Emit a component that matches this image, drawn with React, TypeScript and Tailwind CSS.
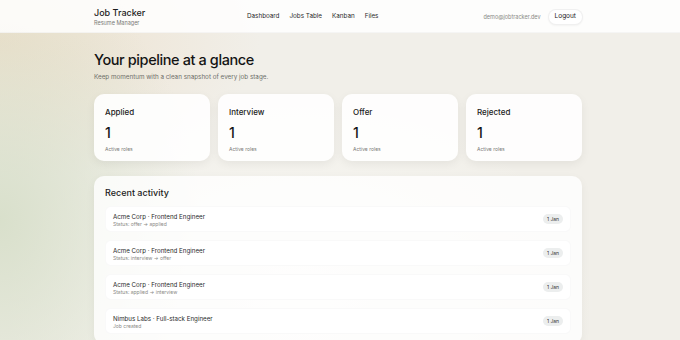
import React from 'react';

const stages = ['Applied', 'Interview', 'Offer', 'Rejected'];

const activity = [
  { title: 'Acme Corp · Frontend Engineer', detail: 'Status: offer → applied' },
  { title: 'Acme Corp · Frontend Engineer', detail: 'Status: interview → offer' },
  { title: 'Acme Corp · Frontend Engineer', detail: 'Status: applied → interview' },
  { title: 'Nimbus Labs · Full-stack Engineer', detail: 'Job created' },
];

function Header() {
  return (
    <header className="h-[33px] bg-white/85 border-b border-black/[0.03]">
      <div className="ml-[94px] flex h-full w-[489px] items-center pt-[2px]">
        <div className="flex w-[153px] flex-col">
          <span className="text-[9px] leading-[12px] font-medium text-[#1c1c1c]">Job Tracker</span>
          <span className="text-[5.5px] leading-[8px] text-[#7a7a76]">Resume Manager</span>
        </div>
        <nav className="flex items-center gap-[10px] text-[6.3px] text-[#2a2a2a]">
          <span>Dashboard</span>
          <span>Jobs Table</span>
          <span>Kanban</span>
          <span>Files</span>
        </nav>
        <div className="ml-auto flex items-center gap-[7px]">
          <span className="text-[5.5px] text-[#8a8a86]">demo@jobtracker.dev</span>
          <button className="h-[16px] rounded-full border border-black/[0.06] bg-white px-[6px] text-[6.5px] text-[#1c1c1c] shadow-[0_1px_2px_rgba(0,0,0,0.04)]">
            Logout
          </button>
        </div>
      </div>
    </header>
  );
}

export default function App() {
  return (
    <div
      className="h-[340px] overflow-hidden bg-[#f1efe9] bg-[radial-gradient(ellipse_200px_260px_at_0px_220px,rgba(214,222,200,0.9),transparent),radial-gradient(ellipse_260px_140px_at_0px_40px,rgba(236,222,200,0.9),transparent),radial-gradient(ellipse_300px_200px_at_300px_300px,rgba(250,250,246,0.9),transparent)]"
      style={{ fontFamily: 'Inter, "Noto Sans", sans-serif' }}
    >
      <Header />
      <main className="ml-[94px] w-[488px] pt-[17px]">
        <h1 className="text-[14.5px] leading-[20px] font-medium tracking-[-0.4px] text-[#141414]">
          Your pipeline at a glance
        </h1>
        <p className="mt-[3px] text-[6.3px] leading-[9px] text-[#6e6e6a]">
          Keep momentum with a clean snapshot of every job stage.
        </p>

        <div className="mt-[12px] grid grid-cols-4 gap-[8px]">
          {stages.map((s) => (
            <div
              key={s}
              className="h-[67px] rounded-[10px] bg-white/90 px-[11px] pt-[13px] shadow-[0_3px_10px_rgba(0,0,0,0.06)]"
            >
              <div className="text-[8px] leading-[10px] font-medium text-[#222]">{s}</div>
              <div className="mt-[8px] text-[14px] leading-[16px] font-medium text-[#141414]">1</div>
              <div className="mt-[5px] text-[5px] leading-[7px] text-[#7a7a76]">Active roles</div>
            </div>
          ))}
        </div>

        <section className="mt-[15px] rounded-[10px] bg-white/80 px-[11px] pt-[11px] pb-[10px] shadow-[0_3px_10px_rgba(0,0,0,0.05)]">
          <h2 className="text-[9px] leading-[12px] font-medium text-[#1c1c1c]">Recent activity</h2>
          <div className="mt-[7px] flex flex-col gap-[8px]">
            {activity.map((a, i) => (
              <div
                key={i}
                className="flex h-[26px] items-center justify-between rounded-[6px] border border-black/[0.025] bg-white pl-[7px] pr-[7px]"
              >
                <div className="flex flex-col pt-[2px]">
                  <span className="text-[6.2px] leading-[9px] text-[#2a2a2a]">{a.title}</span>
                  <span className="text-[5px] leading-[7px] text-[#8a8a86]">{a.detail}</span>
                </div>
                <span className="rounded-full bg-[#eceeee] px-[4px] py-[1px] text-[5px] leading-[8px] text-[#333]">
                  1 Jan
                </span>
              </div>
            ))}
          </div>
        </section>
      </main>
    </div>
  );
}
